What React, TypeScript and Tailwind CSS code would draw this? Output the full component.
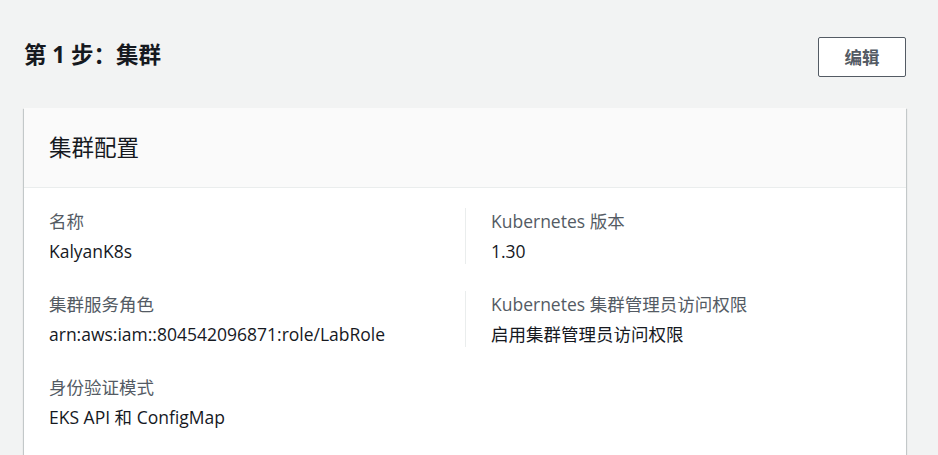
const font = { fontFamily: '"Open Sans", "Noto Sans CJK SC", sans-serif' };

function Field({ label, value }: { label: string; value: string }) {
  return (
    <div className="flex flex-col">
      <div className="text-[17.5px] leading-[26px] text-[#545b64]">{label}</div>
      <div className="mt-[4px] text-[17.5px] leading-[26px] text-[#16191f]">{value}</div>
    </div>
  );
}

export default function App() {
  return (
    <div className="min-h-screen bg-[#f2f3f3] pl-[24px] pr-[32px] pt-[37px]" style={font}>
      <div className="flex items-start justify-between">
        <h2 className="mt-[-2px] text-[22.5px] font-bold leading-[40px] text-[#16191f]">第 1 步：集群</h2>
        <button className="h-[40px] w-[88px] rounded-[2px] border border-[#545b64] bg-white text-[17.5px] font-bold text-[#545b64]">
          编辑
        </button>
      </div>

      <div className="mt-[31px] bg-white shadow-[0_1px_1px_0_rgba(0,28,36,0.3),1px_1px_1px_0_rgba(0,28,36,0.15),-1px_1px_1px_0_rgba(0,28,36,0.15)]">
        <div className="flex h-[80px] items-center border-b border-[#eaeded] bg-[#fafafa] px-[25px]">
          <h3 className="text-[22.5px] font-normal text-[#16191f]">集群配置</h3>
        </div>
        <div className="grid grid-cols-2 pt-[20px] pb-[40px]">
          <div className="flex flex-col gap-[27px] pl-[25px]">
            <Field label="名称" value="KalyanK8s" />
            <Field label="集群服务角色" value="arn:aws:iam::804542096871:role/LabRole" />
            <Field label="身份验证模式" value="EKS API 和 ConfigMap" />
          </div>
          <div className="flex flex-col gap-[27px]">
            <div className="border-l border-[#eaeded] pl-[25px]">
              <Field label="Kubernetes 版本" value="1.30" />
            </div>
            <div className="border-l border-[#eaeded] pl-[25px]">
              <Field label="Kubernetes 集群管理员访问权限" value="启用集群管理员访问权限" />
            </div>
          </div>
        </div>
      </div>
    </div>
  );
}
